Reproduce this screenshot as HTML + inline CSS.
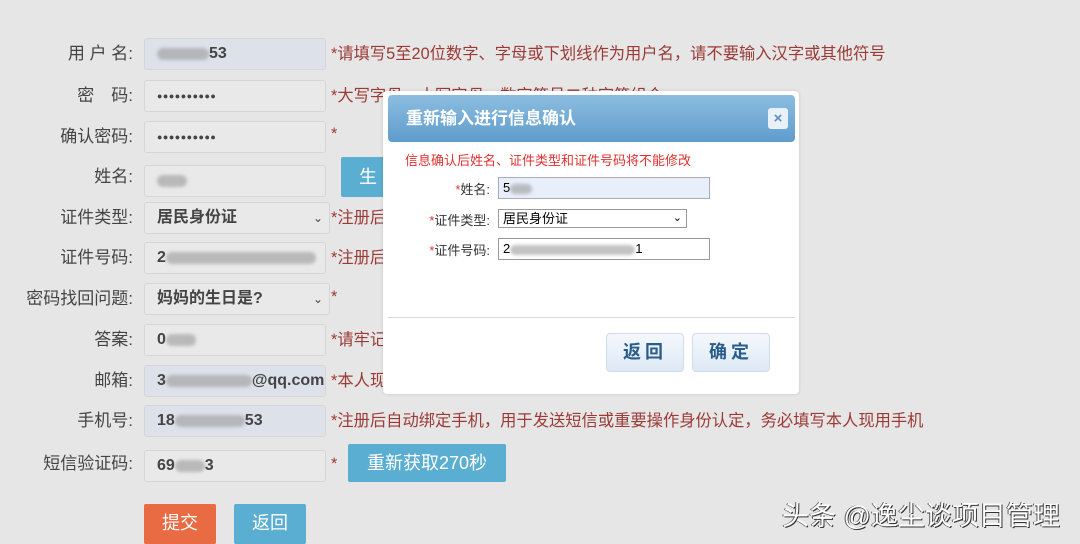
<!DOCTYPE html>
<html><head><meta charset="utf-8"><style>
*{box-sizing:border-box;margin:0;padding:0}
body{width:1080px;height:541px;background:#e6e6e6;position:relative;overflow:hidden;font-family:"Liberation Sans","Noto Sans CJK SC",sans-serif;}
.a{position:absolute}
.lbl{position:absolute;width:133px;text-align:right;font-size:17px;color:#444;line-height:32px}
.box{position:absolute;left:144px;width:182px;height:32px;border:1px solid #d6d6d6;border-radius:3px;background:#e9e9e9;font-size:16px;font-weight:bold;color:#444;line-height:30px;padding-left:12px;white-space:nowrap;overflow:hidden}
.blu{background:#dde1ea}
.hint{position:absolute;left:331px;font-size:16.3px;color:#9b3a36;line-height:32px;white-space:nowrap}
.blur{display:inline-block;height:12px;background:#9a9a9a;opacity:.6;border-radius:6px;vertical-align:middle;filter:blur(1.5px)}
.btn{position:absolute;color:#fff;font-size:18px;text-align:center;border-radius:2px}
.dl{position:absolute;font-size:13px;color:#333;text-align:right;width:110px;left:380px}
.dl b{color:#e03030;font-weight:normal}
.dbtn{position:absolute;top:333px;width:78px;height:39px;border:1px solid #cfdceb;border-radius:4px;background:linear-gradient(#f4f8fc,#dde9f5);color:#2a5d8c;font-weight:bold;font-size:18px;text-align:center;line-height:37px;letter-spacing:4px}
.pw{font-size:9px;letter-spacing:0.5px}
</style></head><body>
<div class="lbl" style="top:38px">用 户 名:</div>
<div class="box blu" style="top:38px"><span class="blur" style="width:52px"></span>53</div>
<div class="hint" style="top:38px">*请填写5至20位数字、字母或下划线作为用户名，请不要输入汉字或其他符号</div>
<div class="lbl" style="top:80px">密　码:</div>
<div class="box pw" style="top:80px">●●●●●●●●●●</div>
<div class="hint" style="top:80px">*大写字母、小写字母、数字符号二种字符组合</div>
<div class="lbl" style="top:121px">确认密码:</div>
<div class="box pw" style="top:121px">●●●●●●●●●●</div>
<div class="hint" style="top:118px">*</div>
<div class="lbl" style="top:161px">姓名:</div>
<div class="box" style="top:165px"><span class="blur" style="width:30px"></span></div>
<div class="btn" style="left:341px;top:157px;width:60px;height:40px;background:#5aaed1;line-height:40px;text-align:left;padding-left:18px">生</div>
<div class="lbl" style="top:202px">证件类型:</div>
<div class="box" style="top:202px;width:186px">居民身份证<span style="position:absolute;right:6px;font-weight:normal;font-size:12px">&#8964;</span></div>
<div class="hint" style="top:202px">*注册后</div>
<div class="lbl" style="top:242px">证件号码:</div>
<div class="box" style="top:242px">2<span class="blur" style="width:150px"></span></div>
<div class="hint" style="top:242px">*注册后</div>
<div class="lbl" style="top:283px">密码找回问题:</div>
<div class="box" style="top:283px;width:186px">妈妈的生日是?<span style="position:absolute;right:6px;font-weight:normal;font-size:12px">&#8964;</span></div>
<div class="hint" style="top:281px">*</div>
<div class="lbl" style="top:324px">答案:</div>
<div class="box" style="top:324px">0<span class="blur" style="width:30px"></span></div>
<div class="hint" style="top:324px">*请牢记</div>
<div class="lbl" style="top:365px">邮箱:</div>
<div class="box blu" style="top:365px">3<span class="blur" style="width:86px"></span>@qq.com</div>
<div class="hint" style="top:365px">*本人现</div>
<div class="lbl" style="top:405px">手机号:</div>
<div class="box blu" style="top:405px">18<span class="blur" style="width:70px"></span>53</div>
<div class="hint" style="top:405px">*注册后自动绑定手机，用于发送短信或重要操作身份认定，务必填写本人现用手机</div>
<div class="lbl" style="top:448px">短信验证码:</div>
<div class="box" style="top:450px">69<span class="blur" style="width:30px"></span>3</div>
<div class="hint" style="top:448px">*</div>
<div class="btn" style="left:348px;top:444px;width:158px;height:38px;background:#5aaed1;line-height:38px">重新获取270秒</div>
<div class="btn" style="left:144px;top:504px;width:72px;height:40px;background:#e86b43;line-height:38px">提交</div>
<div class="btn" style="left:234px;top:504px;width:72px;height:40px;background:#5aaed1;line-height:38px">返回</div>

<div class="a" style="left:383px;top:91px;width:416px;height:303px;background:#fff;border-radius:4px;box-shadow:0 0 3px rgba(0,0,0,.15)"></div>
<div class="a" style="left:388px;top:95px;width:407px;height:47px;border-radius:4px;background:linear-gradient(#8cbde0,#5f9ccc);color:#fff;font-weight:bold;font-size:17px;line-height:47px;padding-left:18px">重新输入进行信息确认</div>
<div class="a" style="left:768px;top:108px;width:20px;height:21px;background:#e8f0f8;border-radius:3px;color:#5f8fbf;font-weight:bold;font-size:15px;text-align:center;line-height:21px">×</div>
<div class="a" style="left:405px;top:152px;font-size:13px;color:#e03030;line-height:18px">信息确认后姓名、证件类型和证件号码将不能修改</div>
<div class="dl" style="top:179px"><b>*</b>姓名:</div>
<div class="a" style="left:498px;top:177px;width:212px;height:22px;border:1px solid #aab;background:#e8eefa;font-size:13px;line-height:20px;padding-left:4px">5<span class="blur" style="width:22px;height:10px"></span></div>
<div class="dl" style="top:210px"><b>*</b>证件类型:</div>
<div class="a" style="left:498px;top:209px;width:189px;height:19px;border:1px solid #999;font-size:13px;line-height:17px;padding-left:4px">居民身份证<span style="position:absolute;right:4px;font-size:11px">&#8964;</span></div>
<div class="dl" style="top:240px"><b>*</b>证件号码:</div>
<div class="a" style="left:498px;top:238px;width:212px;height:22px;border:1px solid #999;font-size:13px;line-height:20px;padding-left:4px">2<span class="blur" style="width:125px;height:10px"></span>1</div>
<div class="a" style="left:388px;top:317px;width:407px;height:1px;background:#cdd9e6"></div>
<div class="dbtn" style="left:606px">返回</div>
<div class="dbtn" style="left:692px">确定</div>

<div class="a" style="left:782px;top:494px;font-size:27px;color:#fff;text-shadow:1px 1px 0 #333,-1px 0 0 #555;white-space:nowrap">头条 @逸尘谈项目管理</div>
</body></html>
